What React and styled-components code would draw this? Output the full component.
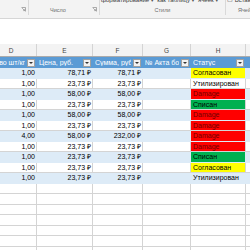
import React from 'react';
import styled, { createGlobalStyle } from 'styled-components';

const GlobalStyle = createGlobalStyle`
  body {
    margin: 0;
    background: #fff;
    font-family: "Liberation Sans", Arial, sans-serif;
  }
`;

const Screen = styled.div`
  width: 250px;
  height: 250px;
  overflow: hidden;
  display: flex;
  flex-direction: column;
`;

const Ribbon = styled.div`
  flex: none;
  display: flex;
  height: 18px;
  background: #f3f3f3;
  border-bottom: 1px solid #d6d6d6;
  overflow: hidden;
`;

const Group = styled.div`
  flex: none;
  width: ${(p) => p.$w}px;
  display: flex;
  flex-direction: column;
  border-right: ${(p) => (p.$last ? 'none' : '1px solid #d9d9d9')};
  margin-bottom: 3px;
`;

const GroupTop = styled.div`
  height: 7px;
  margin-top: -3px;
  display: flex;
  align-items: flex-end;
  gap: 3px;
  padding-left: 1px;
  font-size: 6px;
  line-height: 7px;
  color: #3a3a3a;
  white-space: nowrap;
  overflow: hidden;
`;

const GroupFoot = styled.div`
  flex: 1;
  display: flex;
  align-items: center;
  justify-content: ${(p) => p.$justify || 'center'};
  padding: 0 ${(p) => p.$pr || 0}px 0 ${(p) => p.$pl || 0}px;
  font-size: 5.5px;
  color: #6b6b6b;
  white-space: nowrap;
  overflow: hidden;
`;

const Launcher = styled.svg`
  flex: none;
  width: 5px;
  height: 5px;
  margin-left: auto;
  margin-right: 2px;
`;

const Caret = styled.span`
  font-size: 4px;
  margin-left: 1px;
  color: #555;
`;

const FormulaArea = styled.div`
  flex: none;
  height: 25px;
  background: #fff;
`;

const Sheet = styled.div`
  flex: 1;
  display: flex;
  flex-direction: column;
  margin-left: -14px;
`;

const COLS = '51px 56px 50px 48px 55px 60px';

const ColHeads = styled.div`
  flex: none;
  display: grid;
  grid-template-columns: ${COLS};
  height: 12px;
  background: #f3f3f3;
  border-bottom: 1px solid #ababab;
`;

const ColHead = styled.div`
  display: flex;
  align-items: center;
  justify-content: center;
  font-size: 6.5px;
  color: #444;
  border-right: 1px solid #d4d4d4;
`;

const Row = styled.div`
  flex: none;
  display: grid;
  grid-template-columns: ${COLS};
  height: ${(p) => p.$h || 10}px;
  background: ${(p) => p.$bg || '#fff'};
`;

const Cell = styled.div`
  display: flex;
  align-items: center;
  justify-content: ${(p) => p.$align || 'flex-start'};
  padding: 0 1px 0 2px;
  font-size: 7px;
  line-height: 8px;
  color: ${(p) => p.$color || '#000'};
  background: ${(p) => p.$fill || 'transparent'};
  border-right: 1px solid ${(p) => p.$line || '#d4d4d4'};
  border-bottom: 1px solid ${(p) => p.$line || '#d4d4d4'};
  white-space: nowrap;
  overflow: hidden;
`;

const HeadCell = styled.div`
  display: flex;
  align-items: center;
  justify-content: flex-end;
  gap: 2px;
  padding: 0 1px 0 2px;
  font-size: 7px;
  color: #fff;
  border-right: 1px solid #5b9bd5;
  white-space: nowrap;
  overflow: hidden;
`;

const HeadText = styled.span`
  flex: ${(p) => (p.$clip ? 'none' : '1')};
  overflow: hidden;
`;

const FilterButton = styled.div`
  flex: none;
  width: 6px;
  height: 6px;
  border: 1px solid #a0a0a0;
  background: #f2f2f2;
  display: flex;
  align-items: center;
  justify-content: center;
  &::after {
    content: '';
    border-left: 2px solid transparent;
    border-right: 2px solid transparent;
    border-top: 2px solid #333;
  }
`;

const FILLS = {
  yellow: { fill: '#ffff00', color: '#000' },
  red: { fill: '#ff0000', color: '#6e0000' },
  green: { fill: '#00b050', color: '#000' },
};

const rows = [
  ['1,00', '78,71 ₽', '78,71 ₽', 'Согласован', 'yellow'],
  ['1,00', '23,73 ₽', '23,73 ₽', 'Утилизирован', null],
  ['1,00', '58,00 ₽', '58,00 ₽', 'Damage', 'red'],
  ['1,00', '23,73 ₽', '23,73 ₽', 'Списан', 'green'],
  ['1,00', '58,00 ₽', '58,00 ₽', 'Damage', 'red'],
  ['1,00', '23,73 ₽', '23,73 ₽', 'Damage', 'red'],
  ['4,00', '58,00 ₽', '232,00 ₽', 'Damage', 'red'],
  ['1,00', '23,73 ₽', '23,73 ₽', 'Damage', 'red'],
  ['1,00', '23,73 ₽', '23,73 ₽', 'Списан', 'green'],
  ['1,00', '23,73 ₽', '23,73 ₽', 'Согласован', 'yellow'],
  ['1,00', '23,73 ₽', '23,73 ₽', 'Утилизирован', null],
];

const LauncherIcon = () => (
  <Launcher viewBox="0 0 5 5">
    <path d="M0.5 0.5H4.5V4.5" fill="none" stroke="#8a8a8a" strokeWidth="0.7" />
    <path d="M1.2 1.2L3.6 3.6M3.6 2.2V3.6H2.2" fill="none" stroke="#8a8a8a" strokeWidth="0.7" />
  </Launcher>
);

const App = () => {
  return (
    <Screen>
      <GlobalStyle />
      <Ribbon>
        <Group $w={28}>
          <GroupTop />
          <GroupFoot $justify="flex-end">
            <LauncherIcon />
          </GroupFoot>
        </Group>
        <Group $w={70}>
          <GroupTop />
          <GroupFoot $pl={21}>
            Число
            <LauncherIcon />
          </GroupFoot>
        </Group>
        <Group $w={125}>
          <GroupTop>
            <span>
              форматирование<Caret>▼</Caret>
            </span>
            <span>
              как таблицу<Caret>▼</Caret>
            </span>
            <span>
              ячеек<Caret>▼</Caret>
            </span>
          </GroupTop>
          <GroupFoot>Стили</GroupFoot>
        </Group>
        <Group $w={40} $last>
          <GroupTop>
            <span>▭ Вставить</span>
          </GroupTop>
          <GroupFoot $justify="flex-start" $pl={12}>
            Ячейки
          </GroupFoot>
        </Group>
      </Ribbon>
      <FormulaArea />
      <Sheet>
        <ColHeads>
          {['D', 'E', 'F', 'G', 'H', 'I'].map((c) => (
            <ColHead key={c}>{c}</ColHead>
          ))}
        </ColHeads>
        <Row $h={11} $bg="#5b9bd5">
          <HeadCell>
            <HeadText $clip>Количество шт/кг</HeadText>
            <FilterButton />
          </HeadCell>
          <HeadCell>
            <HeadText>Цена, руб.</HeadText>
            <FilterButton />
          </HeadCell>
          <HeadCell>
            <HeadText>Сумма, руб.</HeadText>
            <FilterButton />
          </HeadCell>
          <HeadCell>
            <HeadText>№ Акта боя</HeadText>
            <FilterButton />
          </HeadCell>
          <HeadCell>
            <HeadText>Статус</HeadText>
            <FilterButton />
          </HeadCell>
          <HeadCell>
            <HeadText />
          </HeadCell>
        </Row>
        {rows.map(([qty, price, sum, status, tone], i) => {
          const band = i % 2 === 0;
          const line = band ? '#ddebf7' : '#d4d4d4';
          const st = tone ? FILLS[tone] : {};
          return (
            <Row key={i} $h={i % 2 ? 10 : 11} $bg={band ? '#ddebf7' : '#fff'}>
              <Cell $align="flex-end" $line={line}>{qty}</Cell>
              <Cell $align="flex-end" $line={line}>{price}</Cell>
              <Cell $align="flex-end" $line={line}>{sum}</Cell>
              <Cell $line={line} />
              <Cell $line={line} $fill={st.fill} $color={st.color}>
                {status}
              </Cell>
              <Cell $line={line} />
            </Row>
          );
        })}
        {Array.from({ length: 8 }).map((_, i) => (
          <Row key={'e' + i} $h={i % 2 ? 11 : 10}>
            {Array.from({ length: 6 }).map((__, j) => (
              <Cell key={j} />
            ))}
          </Row>
        ))}
      </Sheet>
    </Screen>
  );
};

export default App;
